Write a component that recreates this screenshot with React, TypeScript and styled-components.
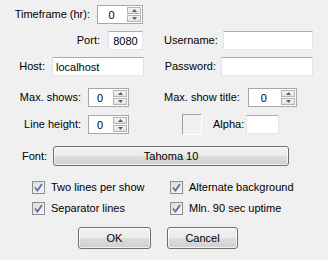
import React from 'react';
import styled, { createGlobalStyle } from 'styled-components';

const GlobalStyle = createGlobalStyle`
  html, body {
    margin: 0;
    padding: 0;
    background: #f0f0f0;
  }
  body {
    font-family: "Liberation Sans", Arial, sans-serif;
    font-size: 11px;
    color: #000;
  }
`;

const Dialog = styled.div`
  width: 328px;
  height: 260px;
  background: #f0f0f0;
  display: flex;
  flex-direction: column;
  box-sizing: border-box;
  padding-top: 5px;
`;

const Row = styled.div<{ $h: number; $mt?: number; $pl?: number; $gap?: number }>`
  display: flex;
  align-items: center;
  height: ${(p) => p.$h}px;
  margin-top: ${(p) => p.$mt ?? 0}px;
  padding-left: ${(p) => p.$pl ?? 0}px;
  gap: ${(p) => p.$gap ?? 0}px;
`;

const Half = styled.div<{ $w: number; $end?: boolean; $gap?: number; $pr?: number; $pl?: number }>`
  width: ${(p) => p.$w}px;
  box-sizing: border-box;
  display: flex;
  align-items: center;
  justify-content: ${(p) => (p.$end ? 'flex-end' : 'flex-start')};
  gap: ${(p) => p.$gap ?? 6}px;
  padding-right: ${(p) => p.$pr ?? 0}px;
  padding-left: ${(p) => p.$pl ?? 0}px;
`;

const Label = styled.span<{ $ml?: number }>`
  white-space: nowrap;
  line-height: 13px;
  margin-left: ${(p) => p.$ml ?? 0}px;
`;

const TextBox = styled.div<{ $w: number; $center?: boolean; $ml?: number }>`
  width: ${(p) => p.$w}px;
  height: 19px;
  margin-left: ${(p) => p.$ml ?? 0}px;
  box-sizing: border-box;
  background: #fff;
  border: 1px solid #e2e3ea;
  border-top-color: #abadb3;
  border-bottom-color: #e3e9ef;
  display: flex;
  align-items: center;
  justify-content: ${(p) => (p.$center ? 'center' : 'flex-start')};
  padding: 0 3px;
  white-space: nowrap;
`;

const SpinBox = styled.div<{ $w: number }>`
  width: ${(p) => p.$w}px;
  height: 19px;
  box-sizing: border-box;
  border: 1px solid #a7a7a7;
  background: #fff;
  display: flex;
`;

const SpinValue = styled.div`
  flex: 1;
  display: flex;
  align-items: center;
  justify-content: center;
  padding-right: 2px;
`;

const SpinButtons = styled.div`
  width: 15px;
  display: flex;
  flex-direction: column;
  gap: 1px;
  padding: 1px 1px 1px 0;
  box-sizing: border-box;
  background: #fff;
`;

const SpinButton = styled.div`
  flex: 1;
  border: 1px solid #b4b4b4;
  background: linear-gradient(#f4f4f4, #e2e2e2);
  display: flex;
  align-items: center;
  justify-content: center;
`;

const ColorWell = styled.div`
  width: 20px;
  height: 21px;
  box-sizing: border-box;
  border: 1px solid #fff;
  border-top-color: #a0a0a0;
  border-left-color: #a0a0a0;
  background: #f0f0f0;
`;

const PushButton = styled.div<{ $w: number; $h: number }>`
  width: ${(p) => p.$w}px;
  height: ${(p) => p.$h}px;
  box-sizing: border-box;
  border: 1px solid #707070;
  border-radius: 3px;
  background: linear-gradient(#f2f2f2 0%, #ebebeb 50%, #dddddd 51%, #cfcfcf 100%);
  box-shadow: inset 0 0 0 1px rgba(255, 255, 255, 0.7);
  display: flex;
  align-items: center;
  justify-content: center;
  white-space: nowrap;
`;

const CheckGroup = styled.div<{ $w: number }>`
  width: ${(p) => p.$w}px;
  display: flex;
  align-items: center;
  gap: 6px;
`;

const CheckMark = styled.div`
  width: 13px;
  height: 13px;
  box-sizing: border-box;
  border: 1px solid #8e8f8f;
  background: linear-gradient(135deg, #dcdcdc, #f6f6f6);
  display: flex;
  align-items: center;
  justify-content: center;
`;

function Arrow({ up }: { up?: boolean }) {
  return (
    <svg width="5" height="3" viewBox="0 0 5 3">
      <path d={up ? 'M0 3 L2.5 0 L5 3 Z' : 'M0 0 L2.5 3 L5 0 Z'} fill="#4d6185" />
    </svg>
  );
}

function Spinner({ w, value }: { w: number; value: string }) {
  return (
    <SpinBox $w={w}>
      <SpinValue>{value}</SpinValue>
      <SpinButtons>
        <SpinButton>
          <Arrow up />
        </SpinButton>
        <SpinButton>
          <Arrow />
        </SpinButton>
      </SpinButtons>
    </SpinBox>
  );
}

function Check({ label, w }: { label: string; w: number }) {
  return (
    <CheckGroup $w={w}>
      <CheckMark>
        <svg width="9" height="9" viewBox="0 0 9 9">
          <path d="M1 4.5 L3.5 7.5 L8 1" fill="none" stroke="#5a6fa5" strokeWidth="1.8" />
        </svg>
      </CheckMark>
      <Label>{label}</Label>
    </CheckGroup>
  );
}

export default function App() {
  return (
    <>
      <GlobalStyle />
      <Dialog>
        <Row $h={19}>
          <Half $w={143} $end $gap={7}>
            <Label>Timeframe (hr):</Label>
            <Spinner w={46} value="0" />
          </Half>
        </Row>

        <Row $h={19} $mt={7}>
          <Half $w={164} $end $gap={8} $pr={21}>
            <Label>Port:</Label>
            <TextBox $w={35} $center>8080</TextBox>
          </Half>
          <Half $w={149} $end $gap={5}>
            <Label>Username:</Label>
            <TextBox $w={92} />
          </Half>
        </Row>

        <Row $h={19} $mt={7}>
          <Half $w={164} $end $gap={7} $pr={20}>
            <Label>Host:</Label>
            <TextBox $w={92}>localhost</TextBox>
          </Half>
          <Half $w={149} $end $gap={5}>
            <Label>Password:</Label>
            <TextBox $w={92} />
          </Half>
        </Row>

        <Row $h={19} $mt={12}>
          <Half $w={164} $end $gap={7} $pr={35}>
            <Label>Max. shows:</Label>
            <Spinner w={41} value="0" />
          </Half>
          <Half $w={133} $end $gap={8}>
            <Label>Max. show title:</Label>
            <Spinner w={51} value="0" />
          </Half>
        </Row>

        <Row $h={21} $mt={7}>
          <Half $w={164} $end $gap={7} $pr={35}>
            <Label>Line height:</Label>
            <Spinner w={41} value="0" />
          </Half>
          <Half $w={140} $pl={18} $gap={0}>
            <ColorWell />
            <Label $ml={11}>Alpha:</Label>
            <TextBox $w={33} $ml={2} />
          </Half>
        </Row>

        <Row $h={20} $mt={11} $pl={22} $gap={6}>
          <Label>Font:</Label>
          <PushButton $w={236} $h={20}>Tahoma 10</PushButton>
        </Row>

        <Row $h={13} $mt={15} $pl={32}>
          <Check w={138} label="Two lines per show" />
          <Check w={150} label="Alternate background" />
        </Row>

        <Row $h={13} $mt={8} $pl={32}>
          <Check w={138} label="Separator lines" />
          <Check w={150} label="Mln. 90 sec uptime" />
        </Row>

        <Row $h={22} $mt={12} $pl={78} $gap={16}>
          <PushButton $w={73} $h={22}>OK</PushButton>
          <PushButton $w={71} $h={22}>Cancel</PushButton>
        </Row>
      </Dialog>
    </>
  );
}
